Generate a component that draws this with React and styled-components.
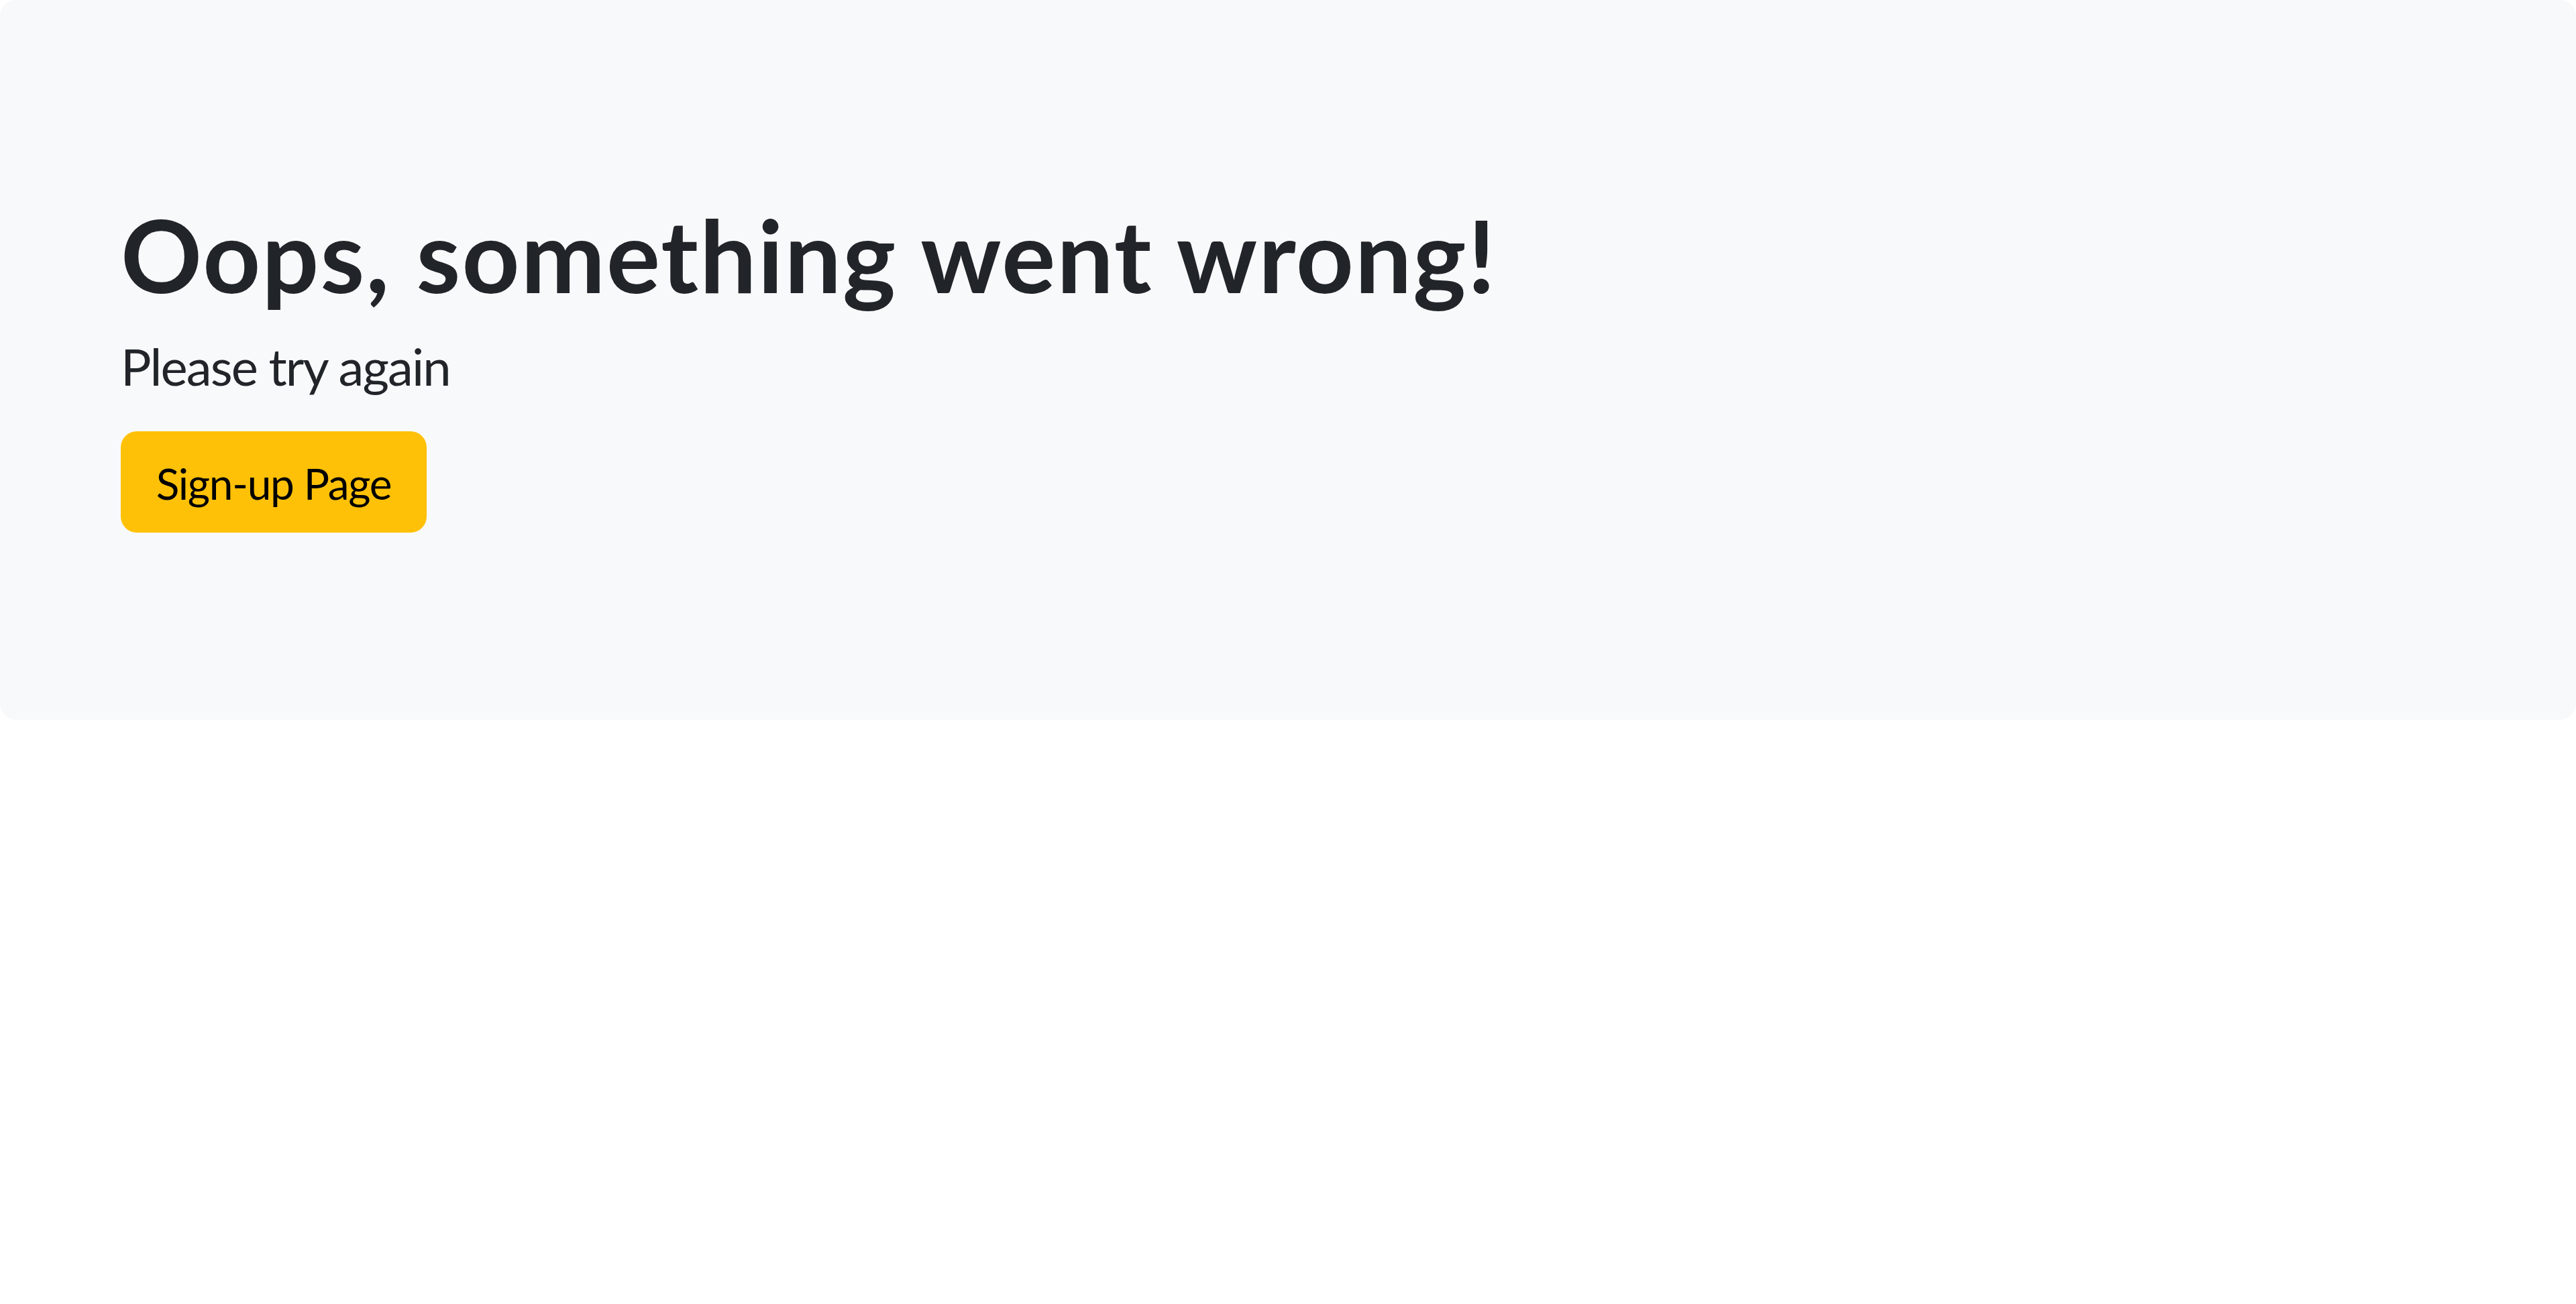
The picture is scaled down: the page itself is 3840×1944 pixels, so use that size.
import React from 'react';
import styled, { createGlobalStyle } from 'styled-components';

const GlobalStyle = createGlobalStyle`
  body {
    margin: 0;
    background: #fff;
    font-family: Lato, "Noto Sans", sans-serif;
    color: #212529;
  }
`

const Jumbotron = styled.div`
  background-color: #f8f9fa;
  border-radius: 24px;
  padding: 289px 180px 279px;
`

const Title = styled.h1`
  margin: 0 0 17px;
  font-size: 150px;
  line-height: 180px;
  font-weight: 700;
  letter-spacing: 1.9px;
`

const Lead = styled.p`
  margin: 0 0 37px;
  font-size: 76px;
  line-height: 120px;
  font-weight: 400;
  letter-spacing: -1.9px;
`

const SignUpButton = styled.button`
  display: block;
  box-sizing: border-box;
  width: 456px;
  height: 151px;
  padding: 30px 0 25px;
  border: none;
  border-radius: 24px;
  background-color: #ffc107;
  color: #000;
  font-family: inherit;
  font-size: 64px;
  line-height: 96px;
  letter-spacing: -1.3px;
  cursor: pointer;
`

const App = () => (
  <>
    <GlobalStyle />
    <Jumbotron>
      <Title>Oops, something went wrong!</Title>
      <Lead>Please try again</Lead>
      <SignUpButton>Sign-up Page</SignUpButton>
    </Jumbotron>
  </>
)

export default App;
